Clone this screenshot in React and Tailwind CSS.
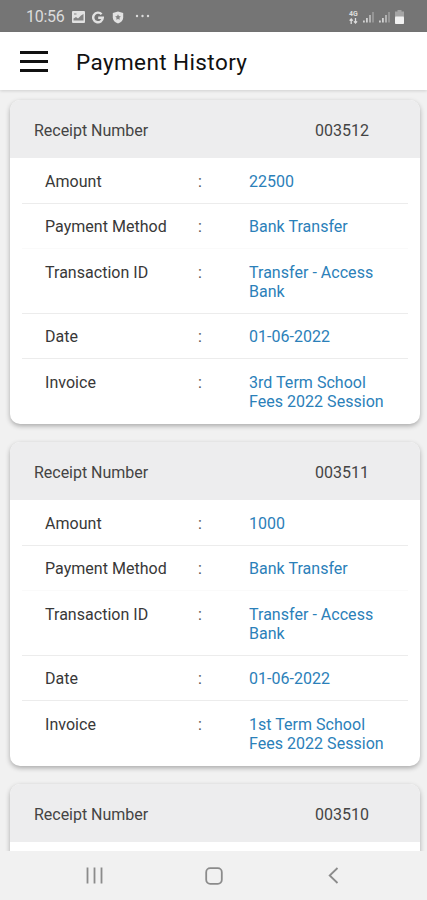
import React from 'react';

const RECEIPTS = [
  { number: '003512', amount: '22500', method: 'Bank Transfer', transaction: 'Transfer - Access Bank', date: '01-06-2022', invoice: '3rd Term School Fees 2022 Session' },
  { number: '003511', amount: '1000', method: 'Bank Transfer', transaction: 'Transfer - Access Bank', date: '01-06-2022', invoice: '1st Term School Fees 2022 Session' },
  { number: '003510' },
];

const FIELDS = [
  { key: 'amount',      label: 'Amount',         border: 'border-[#ececec]' },
  { key: 'method',      label: 'Payment Method', border: 'border-[#fafafa]' },
  { key: 'transaction', label: 'Transaction ID', border: 'border-[#ececec]' },
  { key: 'date',        label: 'Date',           border: 'border-[#ececec]' },
  { key: 'invoice',     label: 'Invoice',        border: 'border-transparent' },
];

function SignalIcon() {
  return (
    <svg width="12" height="12" viewBox="0 0 12 12" fill="#d2d2d2">
      <rect x="0" y="9.5" width="1.8" height="2" />
      <rect x="3" y="7" width="1.8" height="4.5" />
      <rect x="6" y="4" width="2" height="7.5" opacity="0.65" />
      <rect x="9" y="1" width="2" height="10.5" opacity="0.35" />
    </svg>
  );
}

function StatusBar() {
  return (
    <div className="flex h-8 shrink-0 items-center bg-[#757575] pl-[26px] pr-[23px] pt-[2px] text-[#dcdcdc]">
      <span className="w-[46px] text-[16px] leading-4 tracking-[-0.3px]">10:56</span>
      {/* Gallery */}
      <svg width="13" height="12" viewBox="0 0 13 12">
        <rect width="13" height="12" rx="1" fill="#e2e2e2" />
        <path d="M1.5 9.5V7.5L4 6l2 1.5L9 4.5 11.5 3V9.5Z" fill="#858585" />
        <path d="M2 3h2.5" stroke="#858585" />
      </svg>
      {/* Google */}
      <svg className="ml-[7px]" width="12" height="13" viewBox="0 0 13 13" fill="none" stroke="#e2e2e2" strokeWidth="2.6">
        <path d="M10.4 3A5.2 5.2 0 1 0 11.7 6.7H6.7" />
      </svg>
      {/* Shield */}
      <svg className="ml-[8px]" width="12" height="13" viewBox="0 0 12 13">
        <path d="M6 .5 11.2 2v4.5c0 2.9-2.1 5-5.2 6.1C2.9 11.5.8 9.4.8 6.5V2Z" fill="#e2e2e2" />
        <path d="m6 3.3.9 1.8 2 .3-1.5 1.4.4 2L6 7.9l-1.8.9.4-2-1.5-1.4 2-.3Z" fill="#858585" />
      </svg>
      <svg className="ml-[11px]" width="16" height="12" viewBox="0 0 16 12" fill="#dcdcdc">
        <circle cx="2" cy="5" r="1.2" />
        <circle cx="7.5" cy="5" r="1.2" />
        <circle cx="13" cy="5" r="1.2" />
      </svg>
      <div className="ml-auto flex items-center">
        <div className="flex w-[14px] flex-col items-start text-[7px] font-bold leading-[7px] tracking-normal">
          <span>4G</span>
          <svg width="9" height="6" viewBox="0 0 9 6" fill="none" stroke="#dcdcdc" strokeWidth="1.3">
            <path d="M2.2 6V1M.6 2.6 2.2 1l1.6 1.6M6.5 0v5M4.9 3.4 6.5 5l1.6-1.6" />
          </svg>
        </div>
        <SignalIcon />
        <div className="ml-1"><SignalIcon /></div>
        <svg className="ml-[4px]" width="9" height="14" viewBox="0 0 9 14">
          <path d="M2.5 0h4v1.5H9V7H0V1.5h2.5Z" fill="#a5a5a5" />
          <rect y="6.5" width="9" height="7.5" rx=".8" fill="#f2f2f2" />
        </svg>
      </div>
    </div>
  );
}

function Header() {
  return (
    <header className="flex h-[58px] shrink-0 items-center bg-white pl-5 shadow-[0_1px_3px_rgba(0,0,0,0.14)]">
      <button className="flex w-[28px] flex-col gap-[6px]" aria-label="Menu">
        <span className="h-[3px] w-full bg-[#111]" />
        <span className="h-[3px] w-full bg-[#111]" />
        <span className="h-[3px] w-full bg-[#111]" />
      </button>
      <h1 className="ml-[28px] pt-[3px] text-[22.5px] font-[450] tracking-[0.4px] text-[#111]">Payment History</h1>
    </header>
  );
}

function ReceiptCard({ receipt }) {
  return (
    <section className="h-[323.5px] shrink-0 overflow-hidden rounded-[10px] bg-white shadow-[0_2px_5px_rgba(0,0,0,0.3)]">
      <div className="flex h-[58px] items-center bg-[#ededee] pl-6 pt-[3px] text-[#444]">
        <span className="w-[281px] tracking-[-0.03px]">Receipt Number</span>
        <span>{receipt.number}</span>
      </div>
      <div className="px-3">
        {FIELDS.filter(f => receipt[f.key]).map(f => (
          <div key={f.key} className={`flex border-b pb-[11.9px] pl-[23px] pt-[13.7px] leading-[19px] ${f.border}`}>
            <span className="w-[153px] text-[#383838]">{f.label}</span>
            <span className="w-[51px] text-[#555]">:</span>
            <span className="w-[140px] text-[#2b80b9]">{receipt[f.key]}</span>
          </div>
        ))}
      </div>
    </section>
  );
}

function NavBar() {
  return (
    <nav className="flex h-[49px] shrink-0 items-center bg-[#f1f1f1] pl-[86px]">
      <svg width="17" height="17" viewBox="0 0 17 17" fill="none" stroke="#8b8b8b" strokeWidth="1.8">
        <path d="M1.5.5v16M8.5.5v16M15.5.5v16" />
      </svg>
      <svg className="ml-[102px]" width="18" height="18" viewBox="0 0 18 18" fill="none" stroke="#8b8b8b" strokeWidth="1.8">
        <rect x="1.2" y="1.2" width="15.6" height="15.6" rx="4" />
      </svg>
      <svg className="ml-[105px]" width="11" height="17" viewBox="0 0 11 17" fill="none" stroke="#8b8b8b" strokeWidth="1.8">
        <path d="M9.5 1 1.7 8.5l7.8 7.5" />
      </svg>
    </nav>
  );
}

export default function App() {
  return (
    <div className="flex h-[900px] w-[427px] flex-col overflow-hidden bg-[#f1f1f1] font-[Roboto,sans-serif] text-[16px] tracking-[0.03px]">
      <StatusBar />
      <Header />
      <main className="flex min-h-0 flex-1 flex-col gap-[18.5px] overflow-hidden pl-[10px] pr-[7px] pt-[10px]">
        {RECEIPTS.map(r => <ReceiptCard key={r.number} receipt={r} />)}
      </main>
      <NavBar />
    </div>
  );
}
